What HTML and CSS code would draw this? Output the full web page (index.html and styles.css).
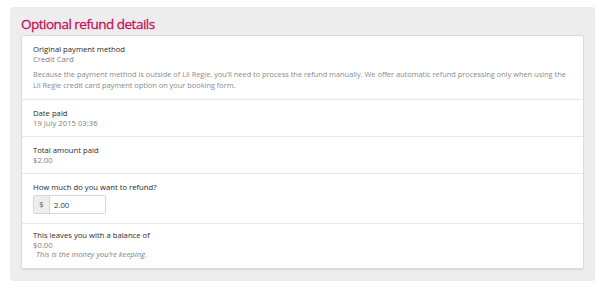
FILE: index.html
```html
<!DOCTYPE html>
<html>
<head>
    <meta charset="utf-8">
    <link rel="stylesheet" href="styles.css">
</head>
<body>
    <div class="panel">
        <h2 class="panel-title">Optional refund details</h2>
        <div class="card">
            <div class="row">
                <div class="label">Original payment method</div>
                <div class="value">Credit Card</div>
                <p class="note">Because the payment method is outside of Lil Regie, you’ll need to process the refund manually. We offer automatic refund processing only when using the Lil Regie credit card payment option on your booking form.</p>
            </div>
            <div class="row">
                <div class="label">Date paid</div>
                <div class="value">19 July 2015 03:36</div>
            </div>
            <div class="row">
                <div class="label">Total amount paid</div>
                <div class="value">$2.00</div>
            </div>
            <div class="row row-input">
                <div class="label">How much do you want to refund?</div>
                <div class="input-group">
                    <span class="addon">$</span>
                    <input class="amount" type="text" value="2.00">
                </div>
            </div>
            <div class="row row-last">
                <div class="label">This leaves you with a balance of</div>
                <div class="value">$0.00</div>
                <div class="hint">This is the money you’re keeping.</div>
            </div>
        </div>
    </div>
</body>
</html>
```

FILE: styles.css
```css
body {
    margin: 0;
    background: #fff;
    font-family: 'Open Sans', 'Liberation Sans', sans-serif;
    color: #333;
}
.panel {
    margin: 7px 5px 0 10px;
    padding: 6px 11px 12px 11px;
    background: #ededed;
    border-radius: 3px;
}
.panel-title {
    margin: 0;
    font-size: 13.5px;
    line-height: 22px;
    font-weight: 400;
    letter-spacing: -0.5px;
    color: #c8105a;
    -webkit-text-stroke: 0.3px #c8105a;
}
.card {
    background: #fff;
    border: 1px solid #dcdcdc;
    border-radius: 2px;
    box-shadow: 0 1px 1px rgba(0, 0, 0, 0.08);
}
.row {
    padding: 8px 11px 8px 11px;
    border-bottom: 1px solid #e6e6e6;
    font-size: 7.7px;
    line-height: 10px;
}
.row-last {
    border-bottom: none;
    padding-top: 7px;
    line-height: 9.5px;
}
.label {
    color: #2a2a2a;
}
.value {
    color: #808080;
}
.note {
    margin: 5px 0 0 0;
    font-size: 7.4px;
    line-height: 11px;
    color: #8a8a8a;
}
.hint {
    padding-left: 3px;
    font-style: italic;
    color: #808080;
}
.row-input {
    padding-bottom: 9px;
}
.input-group {
    display: flex;
    width: 73px;
    height: 19px;
    margin-top: 3px;
    border: 1px solid #d6d6d6;
    border-radius: 2px;
    box-sizing: border-box;
}
.addon {
    width: 15px;
    background: #eee;
    border-right: 1px solid #d6d6d6;
    color: #555;
    font-size: 7.7px;
    line-height: 17px;
    text-align: center;
}
.amount {
    flex: 1;
    min-width: 0;
    border: none;
    padding: 0 4px;
    font-family: inherit;
    font-size: 7.7px;
    color: #333;
    background: #fff;
}
```
